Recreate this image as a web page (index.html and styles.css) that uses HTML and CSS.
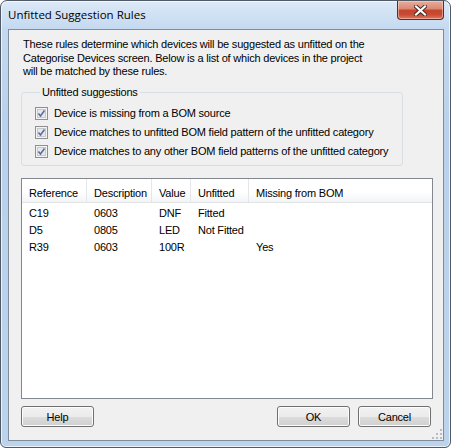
FILE: index.html
```html
<!DOCTYPE html>
<html lang="en">
<head>
    <meta charset="UTF-8">
    <title>Unfitted Suggestion Rules</title>
    <link rel="stylesheet" href="styles.css">
</head>
<body>
    <div class="window">
        <div class="titlebar">
            <span class="title">Unfitted Suggestion Rules</span>
            <div class="close">
                <svg width="13" height="11" viewBox="0 0 13 11">
                    <path d="M2 1.5 L11 9.5 M11 1.5 L2 9.5" stroke="#3b2a28" stroke-width="4" stroke-linecap="square"/>
                    <path d="M2 1.5 L11 9.5 M11 1.5 L2 9.5" stroke="#fff" stroke-width="2.2" stroke-linecap="square"/>
                </svg>
            </div>
        </div>
        <div class="client">
            <p class="intro">These rules determine which devices will be suggested as unfitted on the<br>Categorise Devices screen. Below is a list of which devices in the project<br>will be matched by these rules.</p>

            <fieldset class="group">
                <legend>Unfitted suggestions</legend>
                <label class="check"><span class="box"><svg width="13" height="13" viewBox="0 0 13 13"><rect x="0.5" y="0.5" width="12" height="12" fill="#f4f4f4" stroke="#8f8f8f"/><rect x="2.5" y="2.5" width="8" height="8" fill="#e6e8ec" stroke="#c4c8cf"/><path d="M3.5 6.5 L5.5 9 L9.5 3.5" fill="none" stroke="#5b6d9a" stroke-width="1.6"/></svg></span>Device is missing from a BOM source</label>
                <label class="check"><span class="box"><svg width="13" height="13" viewBox="0 0 13 13"><rect x="0.5" y="0.5" width="12" height="12" fill="#f4f4f4" stroke="#8f8f8f"/><rect x="2.5" y="2.5" width="8" height="8" fill="#e6e8ec" stroke="#c4c8cf"/><path d="M3.5 6.5 L5.5 9 L9.5 3.5" fill="none" stroke="#5b6d9a" stroke-width="1.6"/></svg></span>Device matches to unfitted BOM field pattern of the unfitted category</label>
                <label class="check"><span class="box"><svg width="13" height="13" viewBox="0 0 13 13"><rect x="0.5" y="0.5" width="12" height="12" fill="#f4f4f4" stroke="#8f8f8f"/><rect x="2.5" y="2.5" width="8" height="8" fill="#e6e8ec" stroke="#c4c8cf"/><path d="M3.5 6.5 L5.5 9 L9.5 3.5" fill="none" stroke="#5b6d9a" stroke-width="1.6"/></svg></span>Device matches to any other BOM field patterns of the unfitted category</label>
            </fieldset>

            <div class="list">
                <div class="list-head">
                    <span class="cell">Reference</span>
                    <span class="cell">Description</span>
                    <span class="cell">Value</span>
                    <span class="cell">Unfitted</span>
                    <span class="cell last">Missing from BOM</span>
                </div>
                <div class="list-body">
                    <div class="row"><span>C19</span><span>0603</span><span>DNF</span><span>Fitted</span><span></span></div>
                    <div class="row"><span>D5</span><span>0805</span><span>LED</span><span>Not Fitted</span><span></span></div>
                    <div class="row"><span>R39</span><span>0603</span><span>100R</span><span></span><span>Yes</span></div>
                </div>
            </div>

            <div class="buttons">
                <button class="btn">Help</button>
                <span class="spacer"></span>
                <button class="btn">OK</button>
                <button class="btn">Cancel</button>
            </div>

            <!-- size grip -->
            <svg class="grip" width="10" height="10" viewBox="0 0 10 10">
                <g fill="#b8bcc2">
                    <rect x="8" y="0" width="2" height="2"/>
                    <rect x="4" y="4" width="2" height="2"/><rect x="8" y="4" width="2" height="2"/>
                    <rect x="0" y="8" width="2" height="2"/><rect x="4" y="8" width="2" height="2"/><rect x="8" y="8" width="2" height="2"/>
                </g>
            </svg>
        </div>
    </div>
</body>
</html>
```

FILE: styles.css
```css
* {
    box-sizing: border-box;
}
body {
    margin: 0;
    font-family: "Liberation Sans", Arial, sans-serif;
    font-size: 11px;
    letter-spacing: -0.2px;
    color: #000;
    background: #fff;
}
.window {
    width: 451px;
    height: 448px;
    border: 1px solid #4f5a66;
    border-radius: 7px 7px 6px 6px;
    background: linear-gradient(#dce9f7, #c4d9f0 28px, #b9d1ea 120px, #bcd3ec);
    box-shadow: inset 0 0 0 1px rgba(255, 255, 255, 0.7);
    padding: 0 6px 6px 7px;
    display: flex;
    flex-direction: column;
}
.titlebar {
    height: 28px;
    display: flex;
    align-items: flex-start;
}
.title {
    font-family: "Open Sans", "Noto Sans", sans-serif;
    font-size: 11.5px;
    letter-spacing: 0;
    margin: 6px 0 0 0;
    color: #000;
}
.close {
    margin-left: auto;
    width: 47px;
    height: 19px;
    border: 1px solid #5e2a22;
    border-top: none;
    border-radius: 0 0 4px 4px;
    background: linear-gradient(#e9ad9d, #d98771 45%, #c4442e 50%, #c94a32 75%, #dd7a5e);
    box-shadow: inset 0 0 0 1px rgba(255, 220, 210, 0.5);
    display: flex;
    align-items: center;
    justify-content: center;
}
.client {
    flex: 1;
    position: relative;
    background: #f0f0f0;
    border: 1px solid #7f8c9c;
    padding: 8px 10px 13px 12px;
    display: flex;
    flex-direction: column;
}
.intro {
    margin: 0 0 0 2px;
    line-height: 13.5px;
}
.group {
    width: 382px;
    margin: 7px 0 0 0;
    padding: 5px 0 4px 13px;
    border: 1px solid #d5dfe5;
    border-radius: 3px;
}
.group legend {
    padding: 0 2px;
    margin-left: 5px;
    line-height: 13px;
}
.check {
    display: flex;
    align-items: center;
    height: 19px;
    gap: 6px;
    white-space: nowrap;
}
.box {
    width: 13px;
    height: 13px;
    display: block;
}
.box svg {
    display: block;
}
.list {
    flex: 1;
    margin-top: 12px;
    background: #fff;
    border: 1px solid #828790;
}
.list-head,
.row {
    display: grid;
    grid-template-columns: 65px 65px 39px 58px 1fr;
}
.list-head {
    height: 24px;
    background: linear-gradient(#fff 55%, #f3f4f6);
    border-bottom: 1px solid #e2e3e5;
}
.list-head .cell {
    padding: 8px 0 0 7px;
    border-right: 1px solid #e3e6ea;
}
.list-head .cell.last {
    border-right: none;
}
.list-body {
    padding-top: 2px;
}
.row {
    height: 17px;
    line-height: 17px;
}
.row span {
    padding-left: 7px;
}
.buttons {
    display: flex;
    margin-top: 7px;
    padding-right: 2px;
    gap: 8px;
}
.spacer {
    flex: 1;
}
.btn {
    width: 73px;
    height: 21px;
    font-family: "Liberation Sans", Arial, sans-serif;
    font-size: 11px;
    letter-spacing: -0.2px;
    color: #000;
    border: 1px solid #707070;
    border-radius: 3px;
    background: linear-gradient(#f2f2f2, #ebebeb 50%, #dddddd 50%, #cfcfcf);
    box-shadow: inset 0 0 0 1px #fcfcfc;
    padding: 0;
}
.grip {
    position: absolute;
    right: 1px;
    bottom: 1px;
}
```
